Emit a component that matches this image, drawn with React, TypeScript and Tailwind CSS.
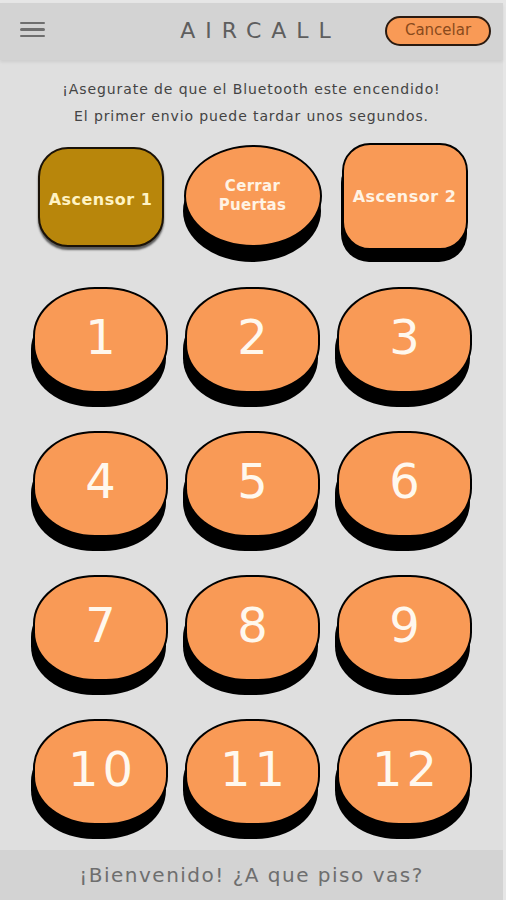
const floors = ["1", "2", "3", "4", "5", "6", "7", "8", "9", "10", "11", "12"];

const font = { fontFamily: '"DejaVu Sans", sans-serif' };

const App = () => {
  return (
    <div className="w-[506px] h-[900px] bg-[#e6e6e6] overflow-hidden" style={font}>
      <div className="w-[503px] h-full bg-[#dfdfdf] flex flex-col">
        {/* Header */}
        <div className="h-[3px] bg-[#e6e6e6]" />
        <header className="h-[57px] bg-[#d3d3d3] shadow-[0_2px_3px_rgba(0,0,0,0.08)] grid grid-cols-[1fr_auto_1fr] items-center pl-[20px] pr-[12px]">
          <button className="flex flex-col gap-[4px] w-[25px] justify-self-start mb-[4px]">
            <span className="h-[2.5px] bg-[#6e6e6e] rounded-sm" />
            <span className="h-[2.5px] bg-[#6e6e6e] rounded-sm" />
            <span className="h-[2.5px] bg-[#6e6e6e] rounded-sm" />
          </button>
          <span className="text-[22px] tracking-[10px] pl-[10px] text-[#5e5e5e] mb-[2px]">AIRCALL</span>
          <button className="justify-self-end w-[106px] h-[30px] rounded-full bg-[#f99a56] border-2 border-[#2a1a10] text-[#8a4a1c] text-[15px] mt-[-2px]">
            Cancelar
          </button>
        </header>

        {/* Info */}
        <div className="text-center text-[#444] text-[14px] leading-[27px] tracking-[0.9px] mt-[16px]">
          <p>¡Asegurate de que el Bluetooth este encendido!</p>
          <p>El primer envio puede tardar unos segundos.</p>
        </div>

        {/* Top controls */}
        <div className="grid grid-cols-[135px_135px_135px] gap-x-[17px] pl-[33px] mt-[13px] h-[106px]">
          <button className="justify-self-center mt-[4px] w-[126px] h-[100px] rounded-[30px] bg-[#b8860b] border-2 border-[#1a1208] shadow-[0_3px_2px_rgba(0,0,0,0.6)] text-[#fff3c4] text-[16px] font-bold tracking-[0.5px] pt-[6px]">
            Ascensor 1
          </button>
          <button className="justify-self-center mt-[2px] w-[138px] h-[102px] rounded-[50%] bg-[#f99a56] border-2 border-black shadow-[-1px_15px_0_#000] text-[#fff3e4] text-[15px] font-bold leading-[19px] tracking-[0.3px]">
            Cerrar
            <br />
            Puertas
          </button>
          <button className="justify-self-center w-[126px] h-[107px] rounded-[28px] bg-[#f99a56] border-2 border-black shadow-[-1px_12px_0_#000] text-[#fff3e4] text-[16px] font-bold tracking-[0.5px]">
            Ascensor 2
          </button>
        </div>

        {/* Floors */}
        <div className="grid grid-cols-[135px_135px_135px] auto-rows-[106px] gap-x-[17px] gap-y-[38px] pl-[33px] mt-[38px]">
          {floors.map((f) => (
            <button
              key={f}
              className="rounded-[46%] bg-[#f99a56] border-2 border-black shadow-[-2px_14px_0_#000] text-[#fff8ee] text-[48px] tracking-[4px] pl-[4px] pb-[6px]"
            >
              {f}
            </button>
          ))}
        </div>

        {/* Footer */}
        <footer className="mt-auto h-[50px] bg-[#d3d3d3] flex items-center justify-center text-[20px] tracking-[1.5px] text-[#6e6e6e]">
          ¡Bienvenido! ¿A que piso vas?
        </footer>
      </div>
    </div>
  );
};

export default App;
